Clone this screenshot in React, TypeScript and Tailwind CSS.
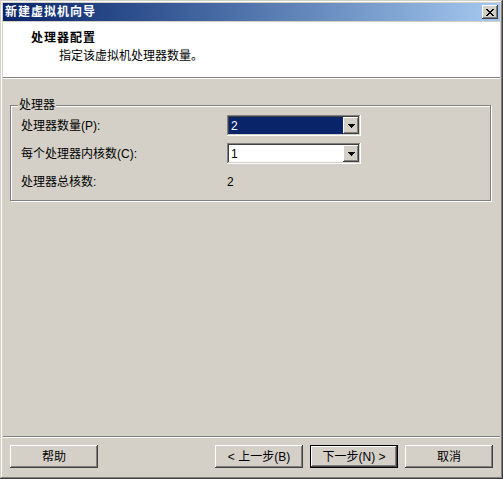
import React from 'react';

const FONT = "font-['Liberation_Sans','Noto_Sans_CJK_SC',sans-serif]";
const RAISED =
  'shadow-[inset_-1px_-1px_#404040,inset_1px_1px_#ffffff,inset_-2px_-2px_#808080,inset_2px_2px_#d4d0c8]';
const SUNKEN =
  'shadow-[inset_-1px_-1px_#ffffff,inset_1px_1px_#808080,inset_-2px_-2px_#d4d0c8,inset_2px_2px_#404040]';

function Arrow() {
  return (
    <svg width="7" height="4" viewBox="0 0 7 4" shapeRendering="crispEdges">
      <path d="M0 0h7v1H0zM1 1h5v1H1zM2 2h3v1H2zM3 3h1v1H3z" fill="#000" />
    </svg>
  );
}

function Combo({ value, selected }: { value: string; selected?: boolean }) {
  return (
    <div className={`flex h-[21px] w-[134px] bg-white p-[2px] ${SUNKEN}`}>
      <div
        className={`flex flex-1 items-center pl-[2px] text-[12px] leading-none ${
          selected ? 'bg-[#0a246a] text-white' : 'text-black'
        }`}
      >
        {value}
      </div>
      <div className={`flex w-[16px] items-center justify-center bg-[#d4d0c8] ${RAISED}`}>
        <Arrow />
      </div>
    </div>
  );
}

function Button({ label, primary }: { label: string; primary?: boolean }) {
  return (
    <button
      className={`h-[23px] w-[88px] bg-[#d4d0c8] text-[12px] leading-none text-black ${
        primary ? 'border border-black' : ''
      } ${RAISED}`}
    >
      {label}
    </button>
  );
}

export default function App() {
  return (
    <div
      className={`${FONT} flex h-[479px] w-[503px] flex-col bg-[#d4d0c8] p-[3px] shadow-[inset_-1px_-1px_#404040,inset_1px_1px_#d4d0c8,inset_-2px_-2px_#808080,inset_2px_2px_#ffffff]`}
    >
      {/* Title bar */}
      <div className="flex h-[18px] shrink-0 items-center justify-between bg-linear-to-r from-[#0a246a] to-[#a6caf0]">
        <span className="pl-[2px] text-[12px] font-bold leading-none tracking-[1px] text-white">
          新建虚拟机向导
        </span>
        <div className={`mr-[2px] flex h-[14px] w-[16px] items-center justify-center bg-[#d4d0c8] ${RAISED}`}>
          <svg width="8" height="7" viewBox="0 0 8 7" shapeRendering="crispEdges">
            <path
              d="M0 0h2v1H0zM6 0h2v1H6zM1 1h2v1H1zM5 1h2v1H5zM2 2h4v1H2zM3 3h2v1H3zM2 4h4v1H2zM1 5h2v1H1zM5 5h2v1H5zM0 6h2v1H0zM6 6h2v1H6z"
              fill="#000"
            />
          </svg>
        </div>
      </div>

      {/* Header */}
      <div className="mt-px h-[55px] shrink-0 bg-white text-black">
        <div className="pl-[28px] pt-[9px] text-[12px] font-bold leading-[14px] tracking-[1px]">
          处理器配置
        </div>
        <div className="pl-[56px] pt-[4px] text-[12px] leading-[14px]">
          指定该虚拟机处理器数量。
        </div>
      </div>
      <div className="h-[2px] shrink-0 border-t border-[#808080] bg-white" />

      {/* Body */}
      <div className="flex-1">
        <div className="relative ml-[7px] mt-[26px] h-[96px] w-[481px] border border-[#808080] shadow-[inset_1px_1px_#ffffff,1px_1px_#ffffff]">
          <span className="absolute left-[7px] top-[-8px] bg-[#d4d0c8] px-px text-[12px] leading-[14px] text-black">
            处理器
          </span>
          <div className="grid grid-cols-[206px_134px] gap-y-[7px] pl-[10px] pt-[9px] text-[12px] leading-none text-black">
            <div className="flex h-[21px] items-center">处理器数量(P):</div>
            <Combo value="2" selected />
            <div className="flex h-[21px] items-center">每个处理器内核数(C):</div>
            <Combo value="1" />
            <div className="flex h-[21px] items-center">处理器总核数:</div>
            <div className="flex h-[21px] items-center">2</div>
          </div>
        </div>
      </div>

      {/* Footer */}
      <div className="h-[2px] shrink-0 border-t border-[#808080] bg-white" />
      <div className="flex shrink-0 px-[7px] pb-[8px] pt-[7px]">
        <Button label="帮助" />
        <div className="flex-1" />
        <div className="flex gap-[7px]">
          <Button label="< 上一步(B)" />
          <Button label="下一步(N) >" primary />
          <Button label="取消" />
        </div>
      </div>
    </div>
  );
}
